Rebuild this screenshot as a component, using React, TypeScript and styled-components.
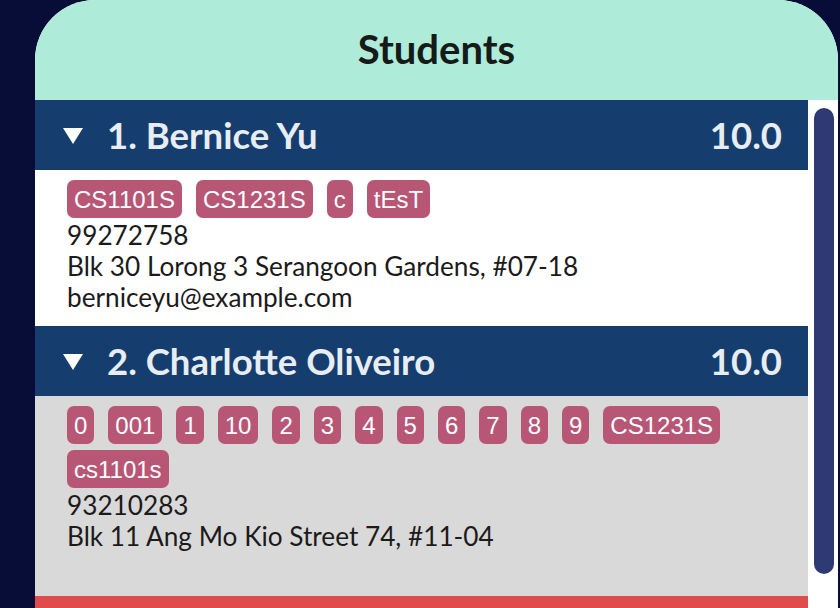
import React from "react";
import styled, { createGlobalStyle } from "styled-components";

const Global = createGlobalStyle`
  html, body { margin: 0; padding: 0; background: #070d36; }
  body { width: 840px; height: 608px; overflow: hidden; }
  * { box-sizing: border-box; }
`;

const Page = styled.div`
  width: 840px;
  height: 608px;
  padding-left: 35px;
  padding-right: 2px;
  display: flex;
  background: #070d36;
`;

const Panel = styled.div`
  flex: 1;
  display: flex;
  flex-direction: column;
  border-radius: 60px 60px 0 0;
  overflow: hidden;
  background: #ffffff;
`;

const Header = styled.div`
  height: 100px;
  flex: none;
  background: #aeecd9;
  display: flex;
  align-items: center;
  justify-content: center;
  font-family: Lato, "Noto Sans", sans-serif;
  font-weight: 700;
  font-size: 40px;
  color: #161a18;
  padding-bottom: 2px;
`;

const Body = styled.div`
  flex: 1;
  display: flex;
  min-height: 0;
`;

const List = styled.div`
  flex: 1;
  display: flex;
  flex-direction: column;
  overflow: hidden;
`;

const Track = styled.div`
  width: 30px;
  flex: none;
  background: #ffffff;
  padding: 8px 4px 0 6px;
`;

const Thumb = styled.div`
  height: 466px;
  border-radius: 10px;
  background: #2e3a73;
`;

const CardHeader = styled.div<{ $tone?: "blue" | "red" }>`
  height: 70px;
  flex: none;
  background: ${(p) => (p.$tone === "red" ? "#e04c4c" : "#153e6f")};
  display: flex;
  align-items: center;
  padding: 0 26px 0 28px;
  font-family: Lato, "Noto Sans", sans-serif;
  font-weight: 700;
  font-size: 36.5px;
  color: #e8edf4;
`;

const Caret = styled.svg`
  width: 20px;
  height: 16px;
  margin: 2px 24px 0 0;
  flex: none;
`;

const Name = styled.span`
  flex: 1;
`;

const Score = styled.span``;

const CardBody = styled.div<{ $alt?: boolean }>`
  flex: none;
  background: ${(p) => (p.$alt ? "#d9d9d9" : "#ffffff")};
  padding: 10px 20px 13px 32px;
  font-family: Lato, "Noto Sans", sans-serif;
  font-size: 26.2px;
  line-height: 31px;
  color: #1b1b1b;
  min-height: ${(p) => (p.$alt ? "200px" : "auto")};
`;

const Tags = styled.div`
  display: flex;
  flex-wrap: wrap;
  gap: 6px 14px;
  margin-bottom: 2px;
`;

const Tag = styled.span`
  height: 38px;
  display: inline-flex;
  align-items: center;
  padding: 0 7px;
  border-radius: 7px;
  background: #b85676;
  color: #ffffff;
  font-family: "Liberation Sans", Arial, sans-serif;
  font-size: 24px;
`;

const Line = styled.div``;

type Student = {
  name: string;
  score: string;
  tags: string[];
  lines: string[];
};

const students: Student[] = [
  {
    name: "1. Bernice Yu",
    score: "10.0",
    tags: ["CS1101S", "CS1231S", "c", "tEsT"],
    lines: ["99272758", "Blk 30 Lorong 3 Serangoon Gardens, #07-18", "berniceyu@example.com"],
  },
  {
    name: "2. Charlotte Oliveiro",
    score: "10.0",
    tags: ["0", "001", "1", "10", "2", "3", "4", "5", "6", "7", "8", "9", "CS1231S", "cs1101s"],
    lines: ["93210283", "Blk 11 Ang Mo Kio Street 74, #11-04"],
  },
];

const CaretIcon = () => (
  <Caret viewBox="0 0 20 16">
    <polygon points="0,0 20,0 10,16" fill="#ffffff" />
  </Caret>
);

export default function App() {
  return (
    <>
      <Global />
      <Page>
        <Panel>
          <Header>Students</Header>
          <Body>
            <List>
              {students.map((s, i) => (
                <React.Fragment key={s.name}>
                  <CardHeader>
                    <CaretIcon />
                    <Name>{s.name}</Name>
                    <Score>{s.score}</Score>
                  </CardHeader>
                  <CardBody $alt={i % 2 === 1}>
                    <Tags>
                      {s.tags.map((t) => (
                        <Tag key={t}>{t}</Tag>
                      ))}
                    </Tags>
                    {s.lines.map((l) => (
                      <Line key={l}>{l}</Line>
                    ))}
                  </CardBody>
                </React.Fragment>
              ))}
              <CardHeader $tone="red" />
            </List>
            <Track>
              <Thumb />
            </Track>
          </Body>
        </Panel>
      </Page>
    </>
  );
}
